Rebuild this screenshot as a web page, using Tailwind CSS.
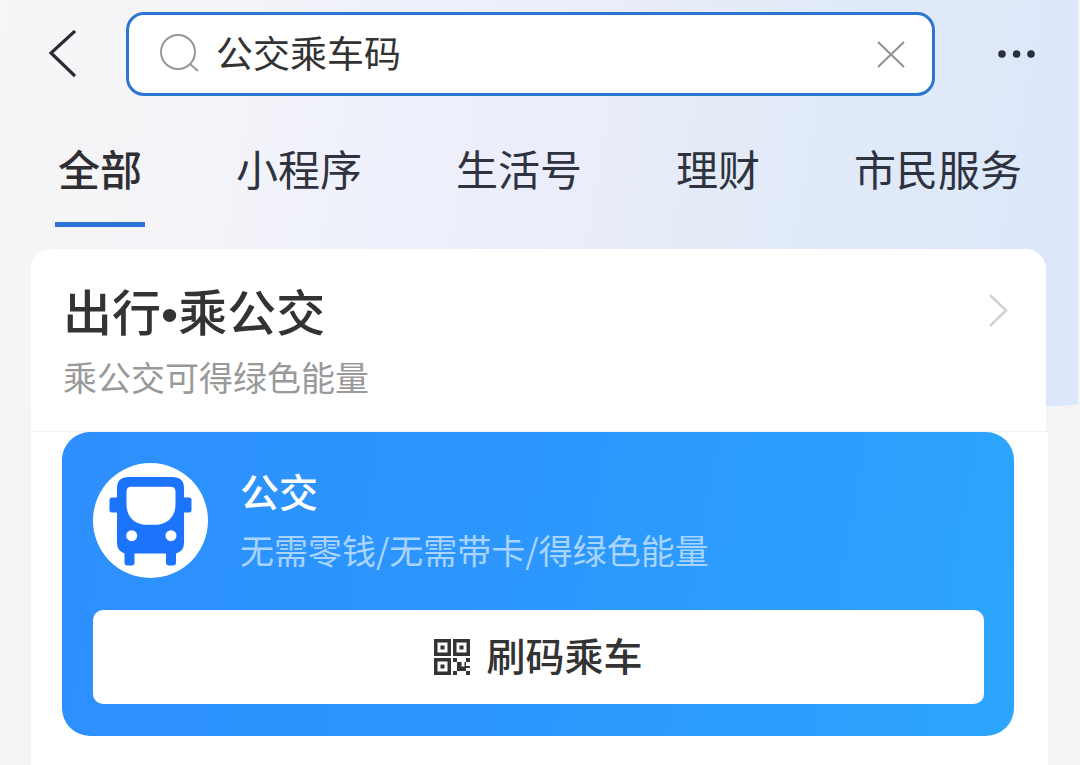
<!DOCTYPE html>
<html lang="zh-CN">
<head>
<meta charset="utf-8">
<meta name="viewport" content="width=device-width, initial-scale=1">
<title>公交乘车码</title>
<script src="https://cdn.jsdelivr.net/npm/@tailwindcss/browser@4"></script>
</head>
<body class="relative min-h-screen overflow-x-hidden bg-[#f4f4f4] font-['Noto_Sans_CJK_SC',sans-serif] text-[#333]">
  <div class="absolute inset-x-0 top-0 mr-0.5 h-[413px] rounded-b-[50%_9px] border-b border-white bg-linear-[100deg,#f6f6f7_0%,#f4f4f8_20%,#eef0fb_36%,#ecedfb_50%,#e3ebf7_66%,#dfe9f9_82%,#dbe7fa_100%]"></div>

  <div class="relative flex min-h-screen flex-col">
    <header class="flex items-center pt-3 pr-11 pl-12">
      <button type="button" aria-label="返回" class="mr-[50px] shrink-0">
        <svg class="block h-12 w-7" viewBox="0 0 28 48" fill="none" stroke="#2b2b35" stroke-width="3.2"><path d="M27 1 3 23 27 46"/></svg>
      </button>
      <form class="flex h-21 flex-1 items-center rounded-[18px] border-3 border-[#2b76d0] bg-white pr-[27px] pl-[30px]" onsubmit="return false">
        <svg class="h-10 w-10 shrink-0" viewBox="0 0 40 40" fill="none" stroke="#979797" stroke-width="2"><circle cx="19" cy="18" r="17"/><path d="M31 30l8 7"/></svg>
        <input type="text" aria-label="搜索" value="公交乘车码" class="ml-[17px] h-14 min-w-0 flex-1 bg-transparent pb-1 text-[37px] leading-[52px] text-[#333] outline-none">
        <button type="button" aria-label="清除" class="shrink-0">
          <svg class="block h-7 w-7" viewBox="0 0 28 28" fill="none" stroke="#909090" stroke-width="2"><path d="M1 2l26 25M27 2L1 27"/></svg>
        </button>
      </form>
      <button type="button" aria-label="更多" class="ml-[63px] shrink-0">
        <svg class="block h-2 w-[38px]" viewBox="0 0 38 8" fill="#2b2e3b"><circle cx="4" cy="4" r="3.8"/><circle cx="18.600" cy="4" r="3.800"/><circle cx="33" cy="4" r="3.800"/></svg>
      </button>
    </header>

    <nav class="mt-10 flex justify-between pr-[58px] pl-[58px] text-[42px] leading-[64px] text-[#2f3340]">
      <a href="#all" aria-current="page" class="-mx-[3px] border-b-5 border-[#2b73d8] px-[3px] pb-[22px] font-medium text-[#2f2f33]">全部</a>
      <a href="#mini">小程序</a>
      <a href="#life">生活号</a>
      <a href="#wealth">理财</a>
      <a href="#civic">市民服务</a>
    </nav>

    <main class="mt-[22px] mr-8 ml-[31px] flex flex-1 flex-col">
      <a href="#bus" class="mr-0.5 flex rounded-t-[20px] border-b border-[#f1f1f1] bg-white pt-7 pr-[38px] pb-[27px] pl-8">
        <div class="flex-1">
          <h1 class="h-[66px] text-[49px] leading-[66px] font-medium">出行<span class="font-['Liberation_Sans',sans-serif]">•</span>乘公交</h1>
          <p class="mt-[7px] text-[34px] leading-[54px] text-[#999]">乘公交可得绿色能量</p>
        </div>
        <svg class="mt-4 h-9 w-5" viewBox="0 0 20 36" fill="none" stroke="#d2d2d2" stroke-width="2.500"><path d="M2 2l16 15.500L2 33"/></svg>
      </a>
      <div class="flex-1 bg-white pr-[34px] pb-[29px] pl-[31px]">
        <section class="rounded-[28px] bg-linear-[100deg,#2d8ffd,#2c97fd_50%,#2ca5fe] pt-[31px] pr-[30px] pb-8 pl-[31px]">
          <div class="flex items-center">
            <svg class="h-[115px] w-[115px] shrink-0" viewBox="0 0 115 115" aria-hidden="true">
              <circle cx="57.500" cy="57.500" r="57.500" fill="#fff"/>
              <g fill="#1b74fb">
                <path d="M36 14h43q12 0 12 11v9.500h5q2.500 0 2.500 2.500v10q0 2.500-2.500 2.500h-5V80q0 8-8 10.500H32q-8-2.500-8-10.500V49.500h-5q-2.500 0-2.500-2.500V37q0-2.500 2.500-2.500h5V25q0-11 12-11z"/>
                <rect x="31.500" y="80" width="10" height="22.500" rx="3"/>
                <rect x="73" y="80" width="10" height="22.500" rx="3"/>
              </g>
              <path fill="#fff" d="M38 23.700h39.500q5 0 5 5v13c0 13-10 20-19 20h-11C43 61.700 33.500 54.700 33.500 41.700V28.700q0-5 4.500-5z"/>
              <circle cx="38.700" cy="72.700" r="5.500" fill="#fff"/><circle cx="78" cy="72.700" r="5.500" fill="#fff"/>
            </svg>
            <div class="ml-8">
              <h2 class="text-[39px] leading-[52px] font-medium text-white">公交</h2>
              <p class="mt-1.5 text-[34px] leading-[56px] text-[#a9d4fe]">无需零钱/无需带卡/得绿色能量</p>
            </div>
          </div>
          <button type="button" class="mt-8 flex h-[94px] w-full items-center justify-center gap-4 rounded-[10px] bg-white text-[39px] leading-[58px] font-medium">
            <svg class="h-9 w-9" viewBox="0 0 36 36" fill="#333" aria-hidden="true">
              <path fill-rule="evenodd" d="M0 0h17v17H0zM3.500 3.500v10h10v-10zM19 0h17v17H19zM22.500 3.500v10h10v-10zM0 19h17v17H0zM3.500 22.500v10h10v-10z"/>
              <path d="M6.500 6.500h4v4h-4zM25.500 6.500h4v4h-4zM6.500 25.500h4v4h-4zM19 19h4v4h-4zM23 23h4.500v9H23zM27.500 27.500h4.500V32h-4.500zM32 19h4v4h-4zM32 23h-1.500v4.500H32zM19 32h4v4h-4zM32 32h4v4h-4zM32 27h4v2h-4z"/>
            </svg>
            <span class="pb-1.5">刷码乘车</span>
          </button>
        </section>
      </div>
    </main>
  </div>
</body>
</html>
